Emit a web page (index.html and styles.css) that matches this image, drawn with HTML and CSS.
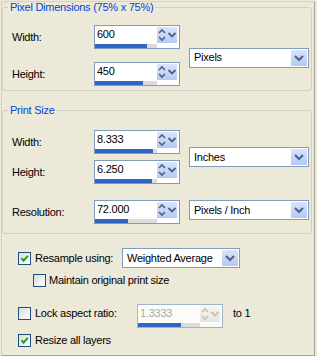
FILE: index.html
```html
<!DOCTYPE html>
<html>
<head>
<meta charset="utf-8">
<link rel="stylesheet" href="styles.css">
</head>
<body>
<div class="panel">
  <fieldset class="group g1">
    <legend>Pixel Dimensions (75% x 75%)</legend>
    <div class="grid grid1">
      <span class="lbl">Width:</span>
      <div class="spin">
        <div class="spin-main"><span class="spin-val">600</span><div class="track"><div class="fill" style="width:52px"></div></div></div>
        <div class="spin-btn"><svg width="10" height="16" viewBox="0 0 10 16"><path d="M2 6 L5 3 L8 6 M2 10 L5 13 L8 10" fill="none" stroke="#4d6185" stroke-width="1.6"/></svg></div>
        <div class="spin-btn"><svg width="10" height="16" viewBox="0 0 10 16"><path d="M1.5 6 L5 9.5 L8.5 6" fill="none" stroke="#4d6185" stroke-width="1.8"/></svg></div>
      </div>
      <div class="combo combo-a"><span class="combo-text">Pixels</span><div class="combo-btn"><svg width="16" height="16" viewBox="0 0 16 16"><path d="M4 6 L8 10 L12 6" fill="none" stroke="#4d6185" stroke-width="2"/></svg></div></div>
      <span class="lbl">Height:</span>
      <div class="spin">
        <div class="spin-main"><span class="spin-val">450</span><div class="track"><div class="fill" style="width:48px"></div></div></div>
        <div class="spin-btn"><svg width="10" height="16" viewBox="0 0 10 16"><path d="M2 6 L5 3 L8 6 M2 10 L5 13 L8 10" fill="none" stroke="#4d6185" stroke-width="1.6"/></svg></div>
        <div class="spin-btn"><svg width="10" height="16" viewBox="0 0 10 16"><path d="M1.5 6 L5 9.5 L8.5 6" fill="none" stroke="#4d6185" stroke-width="1.8"/></svg></div>
      </div>
    </div>
  </fieldset>

  <fieldset class="group g2">
    <legend>Print Size</legend>
    <div class="grid grid2">
      <span class="lbl">Width:</span>
      <div class="spin">
        <div class="spin-main"><span class="spin-val">8.333</span><div class="track"><div class="fill" style="width:58px"></div></div></div>
        <div class="spin-btn"><svg width="10" height="16" viewBox="0 0 10 16"><path d="M2 6 L5 3 L8 6 M2 10 L5 13 L8 10" fill="none" stroke="#4d6185" stroke-width="1.6"/></svg></div>
        <div class="spin-btn"><svg width="10" height="16" viewBox="0 0 10 16"><path d="M1.5 6 L5 9.5 L8.5 6" fill="none" stroke="#4d6185" stroke-width="1.8"/></svg></div>
      </div>
      <div class="combo combo-b"><span class="combo-text">Inches</span><div class="combo-btn"><svg width="16" height="16" viewBox="0 0 16 16"><path d="M4 6 L8 10 L12 6" fill="none" stroke="#4d6185" stroke-width="2"/></svg></div></div>
      <span class="lbl">Height:</span>
      <div class="spin">
        <div class="spin-main"><span class="spin-val">6.250</span><div class="track"><div class="fill" style="width:57px"></div></div></div>
        <div class="spin-btn"><svg width="10" height="16" viewBox="0 0 10 16"><path d="M2 6 L5 3 L8 6 M2 10 L5 13 L8 10" fill="none" stroke="#4d6185" stroke-width="1.6"/></svg></div>
        <div class="spin-btn"><svg width="10" height="16" viewBox="0 0 10 16"><path d="M1.5 6 L5 9.5 L8.5 6" fill="none" stroke="#4d6185" stroke-width="1.8"/></svg></div>
      </div>
      <span class="lbl r3-lbl">Resolution:</span>
      <div class="spin r3">
        <div class="spin-main"><span class="spin-val">72.000</span><div class="track"><div class="fill" style="width:33px"></div></div></div>
        <div class="spin-btn"><svg width="10" height="16" viewBox="0 0 10 16"><path d="M2 6 L5 3 L8 6 M2 10 L5 13 L8 10" fill="none" stroke="#4d6185" stroke-width="1.6"/></svg></div>
        <div class="spin-btn"><svg width="10" height="16" viewBox="0 0 10 16"><path d="M1.5 6 L5 9.5 L8.5 6" fill="none" stroke="#4d6185" stroke-width="1.8"/></svg></div>
      </div>
      <div class="combo combo-c"><span class="combo-text">Pixels / Inch</span><div class="combo-btn"><svg width="16" height="16" viewBox="0 0 16 16"><path d="M4 6 L8 10 L12 6" fill="none" stroke="#4d6185" stroke-width="2"/></svg></div></div>
    </div>
  </fieldset>

  <div class="options">
    <div class="row row1">
      <span class="cb"><svg width="11" height="11" viewBox="0 0 11 11"><path d="M2.5 5.2 L4.5 7.6 L8.8 2.8" fill="none" stroke="#21a121" stroke-width="2"/></svg></span>
      <span class="cb-lbl w87">Resample using:</span>
      <div class="combo combo-w"><span class="combo-text">Weighted Average</span><div class="combo-btn"><svg width="16" height="16" viewBox="0 0 16 16"><path d="M4 6 L8 10 L12 6" fill="none" stroke="#4d6185" stroke-width="2"/></svg></div></div>
    </div>
    <div class="row row2">
      <span class="cb"></span>
      <span class="cb-lbl">Maintain original print size</span>
    </div>
    <div class="row row3">
      <span class="cb"></span>
      <span class="cb-lbl w102">Lock aspect ratio:</span>
      <div class="spin dis">
        <div class="spin-main"><span class="spin-val">1.3333</span><div class="track"><div class="fill" style="width:43px"></div></div></div>
        <div class="spin-btn"><svg width="10" height="16" viewBox="0 0 10 16"><path d="M2 6 L5 3 L8 6 M2 10 L5 13 L8 10" fill="none" stroke="#c5c2b4" stroke-width="1.6"/></svg></div>
        <div class="spin-btn"><svg width="10" height="16" viewBox="0 0 10 16"><path d="M1.5 6 L5 9.5 L8.5 6" fill="none" stroke="#c5c2b4" stroke-width="1.8"/></svg></div>
      </div>
      <span class="to1">to 1</span>
    </div>
    <div class="row row4">
      <span class="cb"><svg width="11" height="11" viewBox="0 0 11 11"><path d="M2.5 5.2 L4.5 7.6 L8.8 2.8" fill="none" stroke="#21a121" stroke-width="2"/></svg></span>
      <span class="cb-lbl">Resize all layers</span>
    </div>
  </div>
</div>
</body>
</html>
```

FILE: styles.css
```css
html, body {
  margin: 0;
  background: #ece9d8;
}
body {
  width: 317px;
  height: 356px;
  overflow: hidden;
  font-family: "Liberation Sans", Arial, sans-serif;
  font-size: 11px;
  letter-spacing: -0.25px;
  color: #000;
}
.panel {
  margin: 1px 0 0 1px;
  width: 314px;
  height: 355px;
  box-sizing: border-box;
  border: 1px solid #d6d2c2;
  border-right-color: #a6a395;
  border-bottom-color: #a6a395;
}
.group {
  margin: 0;
  width: 310px;
  min-width: 0;
  box-sizing: border-box;
  border: 1px solid #d0d0bf;
  border-radius: 3px;
  padding: 12px 2px 4px 9px;
}
.group legend {
  padding: 0 2px;
  margin-left: -4px;
  color: #0046d5;
  line-height: 11px;
  font-size: 11px;
}
.g2 {
  margin-top: 14px;
  padding-top: 14px;
  padding-bottom: 9px;
}
.grid {
  display: grid;
  grid-template-columns: 82px 95px 120px;
}
.grid1 {
  grid-template-rows: 24px 24px;
  row-gap: 13px;
}
.grid2 {
  grid-template-rows: 24px 24px 34px;
  row-gap: 6px;
}
.lbl {
  grid-column: 1;
  align-self: center;
  line-height: 13px;
}
.r3-lbl {
  align-self: end;
  margin-bottom: 5px;
}
.spin {
  display: flex;
  width: 86px;
  height: 24px;
  box-sizing: border-box;
  border: 1px solid #7f9db9;
  background: #fff;
}
.grid .spin {
  grid-column: 2;
}
.grid .r3 {
  align-self: end;
}
.spin-main {
  width: 62px;
  display: flex;
  flex-direction: column;
  justify-content: space-between;
}
.spin-val {
  padding: 2px 0 0 2px;
  line-height: 13px;
}
.track {
  height: 4px;
  background: #dcdcdc;
}
.fill {
  height: 100%;
  background: #2f66c4;
}
.spin-btn {
  width: 10px;
  height: 16px;
  margin-top: 1px;
  background: linear-gradient(#dbe4fb, #b5c9f6);
  display: flex;
}
.spin-btn svg, .combo-btn svg, .cb svg {
  display: block;
}
.combo {
  width: 120px;
  height: 20px;
  box-sizing: border-box;
  border: 1px solid #7f9db9;
  background: #fff;
  padding: 1px;
  display: flex;
  justify-content: space-between;
  align-items: center;
}
.combo-text {
  padding-left: 3px;
  line-height: 13px;
  white-space: nowrap;
}
.combo-btn {
  width: 16px;
  height: 16px;
  background: linear-gradient(#d9e3fc, #b4c8f6);
  border-radius: 1px;
  display: flex;
  flex: none;
}
.combo-a {
  grid-column: 3;
  grid-row: 1 / span 2;
  align-self: center;
  margin-top: 4px;
}
.combo-b {
  grid-column: 3;
  grid-row: 1 / span 2;
  align-self: center;
}
.combo-c {
  grid-column: 3;
  grid-row: 3;
  align-self: start;
  margin-top: 10px;
}
.options {
  margin-top: 14px;
  padding-left: 16px;
  display: flex;
  flex-direction: column;
}
.row {
  display: flex;
  align-items: center;
}
.row1 {
  height: 20px;
}
.row2 {
  margin-top: 6px;
  margin-left: 15px;
}
.row3 {
  margin-top: 17px;
  height: 24px;
  align-items: flex-start;
}
.row3 .cb, .row3 .cb-lbl, .row3 .to1 {
  margin-top: 3px;
}
.row4 {
  margin-top: 6px;
}
.cb {
  width: 13px;
  height: 13px;
  box-sizing: border-box;
  border: 1px solid #1c5180;
  background: linear-gradient(135deg, #dcdcd7, #fff);
  flex: none;
}
.cb-lbl {
  margin-left: 4px;
  line-height: 13px;
  white-space: nowrap;
}
.row2 .cb-lbl {
  margin-left: 3px;
}
.w87 {
  width: 87px;
  flex: none;
}
.w102 {
  width: 102px;
  flex: none;
}
.combo-w {
  width: 118px;
}
.spin.dis {
  border-color: #9fb3cb;
  background: #fbfbf9;
}
.spin.dis .spin-val {
  color: #aca899;
}
.spin.dis .spin-btn {
  background: linear-gradient(#f6f5f0, #e8e6dc);
}
.to1 {
  margin-left: 10px;
  line-height: 13px;
}
```
